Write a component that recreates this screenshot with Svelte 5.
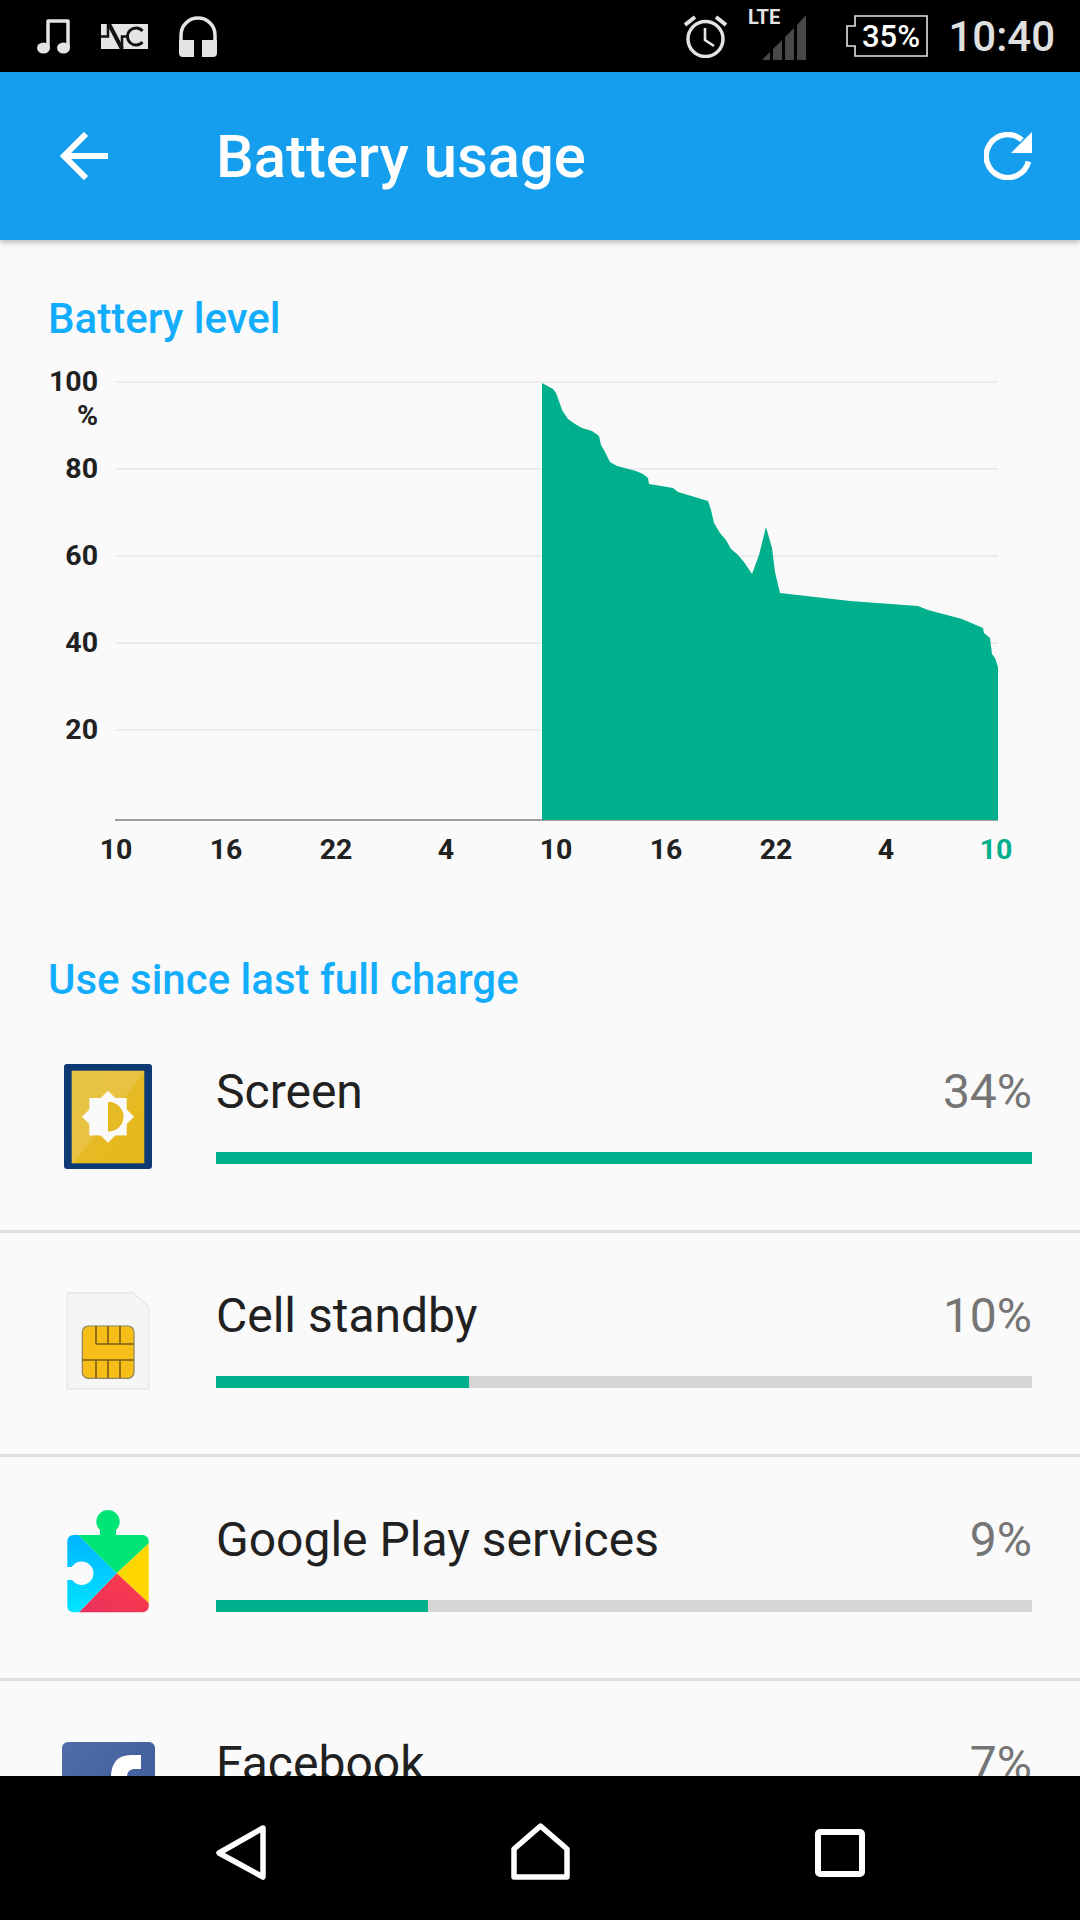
<script>
    const yLabels = ["100", "80", "60", "40", "20"];
    const xLabels = ["10", "16", "22", "4", "10", "16", "22", "4", "10"];
    const gridLines = [382, 469, 556, 643, 730];

    // Battery curve, traced from the screen (x, y in page pixels)
    const curve = "542,383 553,389 556,393 559,401 562,410 568,419 575,424 582,428 592,431 599,436 601,445 605,452 608,458 610,462 617,466 636,471 643,474 648,478 649,484 673,488 678,492 708,501 711,510 714,523 720,533 726,540 731,549 737,554 744,562 752,574 759,555 766,527 772,548 775,572 780,593 850,601 918,606 928,610 962,619 983,628 984,633 990,638 992,654 995,658 998,667 998,820 542,820";

    const apps = [
        { name: "Screen", percent: 34, fill: 100, icon: "screen" },
        { name: "Cell standby", percent: 10, fill: 31, icon: "sim" },
        { name: "Google Play services", percent: 9, fill: 26, icon: "play" },
        { name: "Facebook", percent: 7, fill: 20, icon: "facebook" }
    ];
</script>

<div class="phone">
    <div class="status">
        <div class="status-left">
            <svg width="33" height="36" viewBox="0 0 33 36">
                <path d="M11 30V3h20v27" fill="none" stroke="#e4e4e4" stroke-width="3.5" stroke-linejoin="round" />
                <ellipse cx="6.500" cy="30" rx="6.500" ry="5.500" fill="#e4e4e4" />
                <ellipse cx="26.500" cy="30" rx="6.500" ry="5.500" fill="#e4e4e4" />
            </svg>
            <svg width="47" height="25" viewBox="0 0 47 25">
                <rect width="47" height="25" fill="#e4e4e4" />
                <path d="M0 12.500H7V0" fill="none" stroke="#111" stroke-width="2.5" />
                <path d="M8 0 21 25" fill="none" stroke="#111" stroke-width="4" />
                <path d="M21 25V12.500H28" fill="none" stroke="#111" stroke-width="2.5" />
                <path d="M41.500 7A8.500 8.500 0 1 0 41.500 18" fill="none" stroke="#111" stroke-width="2.800" />
            </svg>
            <svg width="38" height="41" viewBox="0 0 38 41">
                <path d="M2 26V19a17 17 0 0 1 34 0v7" fill="none" stroke="#e4e4e4" stroke-width="3.5" />
                <path d="M0 24h15v17H4a4 4 0 0 1-4-4zM23 24h15v13a4 4 0 0 1-4 4H23z" fill="#e4e4e4" />
            </svg>
        </div>
        <div class="status-right">
            <svg class="alarm" width="43" height="43" viewBox="0 0 43 43">
                <circle cx="21.500" cy="24" r="17.500" fill="none" stroke="#e4e4e4" stroke-width="3.5" />
                <path d="M21 13v12l9 6" fill="none" stroke="#e4e4e4" stroke-width="2.6" />
                <path d="M1 10 11 2M42 10 32 2" fill="none" stroke="#e4e4e4" stroke-width="4" />
            </svg>
            <svg class="signal" width="58" height="60" viewBox="0 0 58 60">
                <text x="0" y="24" class="lte">LTE</text>
                <path d="M14 60 22 52V60ZM25 49 34 40V60H25ZM37 37 46 28V60H37ZM49 25 58 15V60H49Z" fill="#484848" />
            </svg>
            <svg class="battery" width="82" height="42" viewBox="0 0 82 42">
                <path d="M9 1H81V41H9V31H1V11H9Z" fill="none" stroke="#e4e4e4" stroke-width="1.6" />
                <text x="45" y="32" text-anchor="middle" class="level">35%</text>
            </svg>
            <span class="time">10:40</span>
        </div>
    </div>

    <header>
        <svg width="48" height="48" viewBox="0 0 48 48">
            <path d="M48 24H4M26 2 4 24l22 22" fill="none" stroke="#fff" stroke-width="6" />
        </svg>
        <h1>Battery usage</h1>
        <svg width="48" height="48" viewBox="0 0 48 48">
            <path d="M44.500 29.500A21.500 21.500 0 1 1 38 8" fill="none" stroke="#fff" stroke-width="5.500" />
            <path d="M48 0V21H27Z" fill="#fff" />
        </svg>
    </header>

    <main>
        <h2 class="first">Battery level</h2>
        <div class="chart">
            <div class="y-axis">
                {#each yLabels as label, i}
                    <div class="y-label">{label}{#if i === 0}<br />%{/if}</div>
                {/each}
            </div>
            <svg class="plot" width="883" height="484" viewBox="115 338 883 484">
                {#each gridLines as y}
                    <line x1="115" x2="998" y1={y} y2={y} stroke="#ececec" stroke-width="2" />
                {/each}
                <line x1="115" x2="998" y1="820" y2="820" stroke="#9e9e9e" stroke-width="2" />
                <polygon points={curve} fill="#00B08C" />
            </svg>
        </div>
        <div class="x-axis">
            {#each xLabels as label, i}
                <span class:now={i === xLabels.length - 1}>{label}</span>
            {/each}
        </div>

        <h2>Use since last full charge</h2>

        {#each apps as app}
            <div class="row">
                <svg class="icon" width="110" height="110" viewBox="0 0 110 110">
                    {#if app.icon === "screen"}
                        <defs>
                            <linearGradient id="gold" x1="0" y1="0" x2="1" y2="1">
                                <stop offset="0" stop-color="#E8C545" />
                                <stop offset="0.5" stop-color="#E8C240" />
                                <stop offset="0.52" stop-color="#E6BA22" />
                                <stop offset="1" stop-color="#E6B81E" />
                            </linearGradient>
                        </defs>
                        <rect x="11" y="2" width="88" height="105" rx="3" fill="#0D3A73" />
                        <rect x="18.700" y="8.700" width="72.600" height="92.600" fill="url(#gold)" />
                        <rect x="36.300" y="36" width="37.400" height="37.400" fill="#fafafa" />
                        <polygon points="55,28.7 81,54.7 55,80.7 29,54.7" fill="#fafafa" />
                        <path d="M55 39.700A15.500 15 0 0 1 55 69.700Z" fill="#E6BA22" />
                    {:else if app.icon === "sim"}
                        <polygon points="14.3,6.7 80.3,6.7 95.7,21.3 95.7,103 14.3,103" fill="#F5F5F5" stroke="#e8e8e8" stroke-width="1.5" />
                        <rect x="29.300" y="40" width="51.700" height="52.300" rx="6" fill="#F7BE1A" stroke="#8c8360" stroke-width="1.2" />
                        <path d="M43 40V58M55 40V58M67 40V58M43 58H81M29.300 74H81M43 74V92M55 74V92M67 74V92" fill="none" stroke="#7a5c10" stroke-width="1.6" />
                    {:else if app.icon === "play"}
                        <defs>
                            <clipPath id="body"><rect x="14.300" y="25" width="81.400" height="77.300" rx="6" /></clipPath>
                            <linearGradient id="cyan" x1="0" y1="0" x2="0" y2="1">
                                <stop offset="0" stop-color="#00B4FF" />
                                <stop offset="1" stop-color="#00E5FF" />
                            </linearGradient>
                            <linearGradient id="red" x1="1" y1="0" x2="0" y2="1">
                                <stop offset="0" stop-color="#FF3D47" />
                                <stop offset="1" stop-color="#E8305E" />
                            </linearGradient>
                        </defs>
                        <circle cx="55" cy="11.700" r="11.700" fill="#00E676" />
                        <rect x="47" y="18" width="16" height="9" fill="#00E676" />
                        <g clip-path="url(#body)">
                            <polygon points="25.3,25 96,25 96,33.3 63.7,63.3" fill="#00E676" />
                            <polygon points="96,33.3 96,93.3 63.7,63.3" fill="#FFD600" />
                            <polygon points="63.7,63.3 96,93.3 96,103 25.3,103" fill="url(#red)" />
                            <polygon points="14,25 25.3,25 63.7,63.3 25.3,103 14,103" fill="url(#cyan)" />
                        </g>
                        <circle cx="28.700" cy="63.300" r="11.700" fill="#fafafa" />
                        <rect x="13" y="57" width="16" height="13" fill="#fafafa" />
                    {:else}
                        <defs>
                            <linearGradient id="fb" x1="0" y1="0" x2="1" y2="1">
                                <stop offset="0" stop-color="#4F6DA6" />
                                <stop offset="1" stop-color="#3B5998" />
                            </linearGradient>
                        </defs>
                        <rect x="9" y="8" width="93" height="100" rx="6" fill="url(#fb)" />
                        <path d="M88 21H78C64 21 58 30 58 43V110H74V43C74 38 77 35 82 35H88Z" fill="#fff" />
                    {/if}
                </svg>
                <div class="info">
                    <div class="line">
                        <span class="name">{app.name}</span>
                        <span class="percent">{app.percent}%</span>
                    </div>
                    <div class="bar"><div class="bar-fill" style="width: {app.fill}%"></div></div>
                </div>
            </div>
        {/each}
    </main>

    <nav>
        <svg width="51" height="60" viewBox="0 0 51 60">
            <path d="M48 6 4 31 48 55Z" fill="none" stroke="#fff" stroke-width="5.500" stroke-linejoin="round" />
        </svg>
        <svg width="59" height="60" viewBox="0 0 59 60">
            <path d="M3 27 29.500 4 56 27V55H3Z" fill="none" stroke="#fff" stroke-width="5.500" stroke-linejoin="round" />
        </svg>
        <svg width="50" height="60" viewBox="0 0 50 60">
            <rect x="3" y="10" width="44" height="42" rx="2" fill="none" stroke="#fff" stroke-width="6" />
        </svg>
    </nav>
</div>

<style>
    :global(body) {
        margin: 0;
        background: #000;
    }

    .phone {
        display: flex;
        flex-direction: column;
        width: 1080px;
        height: 1920px;
        overflow: hidden;
        font-family: Roboto, "Liberation Sans", sans-serif;
    }

    .status {
        flex: 0 0 72px;
        display: flex;
        align-items: flex-start;
        justify-content: space-between;
        background: #000;
    }

    .status-left {
        display: flex;
        align-items: center;
        gap: 31px;
        height: 72px;
        padding-left: 37px;
    }

    .status-right {
        display: flex;
        align-items: flex-start;
        padding-right: 25px;
    }

    .alarm {
        margin-top: 15px;
    }

    .signal {
        margin-left: 21px;
    }

    .battery {
        margin: 15px 0 0 40px;
    }

    .lte {
        font: 700 20px Roboto, sans-serif;
        fill: #e4e4e4;
    }

    .level {
        font: 500 31px Roboto, sans-serif;
        fill: #fff;
    }

    .time {
        margin: 11px 0 0 20px;
        font-size: 42px;
        font-weight: 500;
        line-height: 52px;
        color: #e0e0e0;
    }

    header {
        flex: 0 0 168px;
        z-index: 1;
        display: flex;
        align-items: center;
        padding: 0 48px 0 60px;
        background: #169EEE;
        box-shadow: 0 2px 6px rgba(0, 0, 0, 0.3);
    }

    h1 {
        flex: 1;
        margin: 2px 0 0 108px;
        font-size: 59.800px;
        font-weight: 500;
        color: #fff;
    }

    main {
        flex: 1;
        overflow: hidden;
        background: #FAFAFA;
    }

    h2 {
        margin: 0 0 5px;
        padding-left: 48px;
        font-size: 42px;
        font-weight: 500;
        line-height: 48px;
        color: #12ADFD;
    }

    h2.first {
        margin: 55px 0 -5px;
    }

    .chart {
        display: flex;
        gap: 17px;
    }

    .y-axis {
        width: 98px;
    }

    .y-label {
        box-sizing: border-box;
        height: 87px;
        padding-top: 27px;
        text-align: right;
        font-size: 28.500px;
        font-weight: 700;
        line-height: 34px;
        color: #212121;
    }

    .x-axis {
        display: flex;
        height: 134px;
        padding-left: 61px;
    }

    .x-axis span {
        width: 110px;
        text-align: center;
        font-size: 28.500px;
        font-weight: 700;
        line-height: 56px;
        color: #212121;
    }

    .x-axis span.now {
        color: #00B08C;
    }

    .row {
        box-sizing: border-box;
        display: flex;
        gap: 53px;
        height: 224px;
        padding: 53px 48px 0 53px;
        border-bottom: 3px solid #E0E0E0;
    }

    .icon {
        flex: none;
    }

    .info {
        flex: 1;
    }

    .line {
        display: flex;
        justify-content: space-between;
        margin-top: 2px;
        font-size: 48px;
        line-height: 56px;
    }

    .name {
        color: #212121;
    }

    .percent {
        color: #757575;
    }

    .bar {
        height: 12px;
        margin-top: 32px;
        background: #D6D6D6;
    }

    .bar-fill {
        height: 100%;
        background: #00B08C;
    }

    nav {
        flex: 0 0 144px;
        display: flex;
        align-items: flex-start;
        gap: 245px;
        box-sizing: border-box;
        padding: 46px 0 0 215px;
        background: #000;
    }
</style>
